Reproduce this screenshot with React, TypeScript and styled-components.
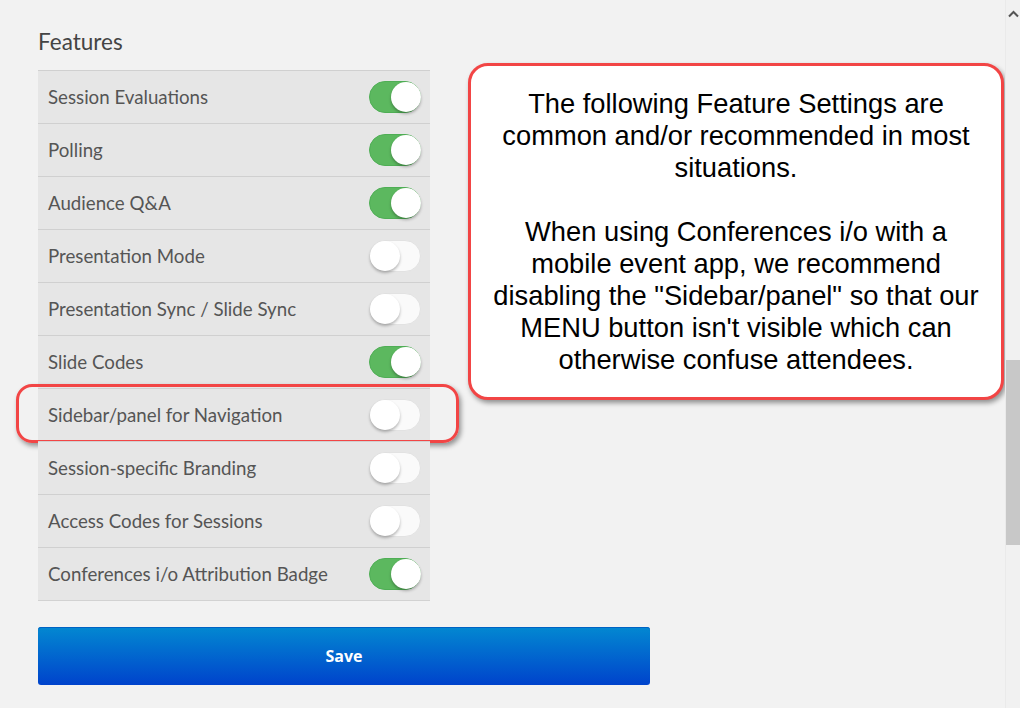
import React, { useState } from 'react';
import styled, { createGlobalStyle } from 'styled-components';

const GlobalStyle = createGlobalStyle`
  html, body {
    margin: 0;
    padding: 0;
    background: #f2f2f2;
  }
  body {
    font-family: Lato, "Open Sans", sans-serif;
    overflow: hidden;
  }
`;

const Page = styled.div`
  display: flex;
  width: 1020px;
  height: 708px;
  background: #f2f2f2;
`;

const Content = styled.div`
  flex: 1;
  display: grid;
  grid-template-columns: 392px 536px;
  grid-template-rows: auto auto auto;
  column-gap: 38px;
  align-content: start;
  padding: 28px 0 0 38px;
`;

const Heading = styled.h2`
  grid-column: 1 / 3;
  margin: 0 0 14px;
  font-size: 22.5px;
  line-height: 28px;
  font-weight: 400;
  color: #444;
`;

const List = styled.div`
  display: flex;
  flex-direction: column;
  border-bottom: 1px solid #d2d2d2;
`;

const Row = styled.div`
  position: relative;
  display: flex;
  align-items: center;
  justify-content: space-between;
  height: 52px;
  padding: 0 9px 0 10px;
  background: #e6e6e6;
  border-top: 1px solid #d0d0d0;
`;

const Label = styled.span`
  font-size: 18.7px;
  color: #555;
`;

const Highlight = styled.div`
  position: absolute;
  left: -22px;
  right: -29px;
  top: -5px;
  bottom: -2px;
  border: 3px solid #f24545;
  border-radius: 16px;
  box-shadow: 2px 3px 5px rgba(0, 0, 0, 0.4);
  pointer-events: none;
`;

const Track = styled.button<{ $on: boolean }>`
  position: relative;
  width: 52px;
  height: 32px;
  padding: 0;
  border-radius: 16px;
  cursor: pointer;
  border: 1px solid ${(p) => (p.$on ? '#4fae55' : '#e2e2e2')};
  background: ${(p) => (p.$on ? '#5cb85f' : '#fafafa')};
`;

const Knob = styled.span<{ $on: boolean }>`
  position: absolute;
  top: 0;
  left: ${(p) => (p.$on ? '21px' : '0')};
  width: 30px;
  height: 30px;
  border-radius: 50%;
  background: #fff;
  box-shadow: 0 2px 3px rgba(0, 0, 0, 0.28);
`;

const Callout = styled.div`
  margin-top: -7px;
  align-self: start;
  box-sizing: border-box;
  width: 536px;
  height: 337px;
  padding: 22px 4px 0;
  background: #fff;
  border: 3px solid #f24545;
  border-radius: 20px;
  box-shadow: 2px 3px 5px rgba(0, 0, 0, 0.4);
  font-family: "Liberation Sans", Arial, sans-serif;
  font-size: 27.3px;
  line-height: 32px;
  color: #000;
  text-align: center;
  white-space: nowrap;
`;

const Para = styled.p`
  margin: 0 0 32px;
`;

const SaveButton = styled.button`
  grid-column: 1 / 3;
  margin-top: 26px;
  width: 612px;
  height: 58px;
  border: none;
  border-radius: 3px;
  background: linear-gradient(to bottom, #0388d1, #0043cc);
  box-shadow: inset 0 1px 0 #0063c4;
  color: #fff;
  font-family: "Open Sans", Lato, sans-serif;
  font-weight: 700;
  font-size: 16px;
  cursor: pointer;
`;

const Scrollbar = styled.div`
  width: 14px;
  display: flex;
  flex-direction: column;
  align-items: center;
  background: #f1f1f1;
  border-left: 1px solid #eaeaea;
`;

const Arrow = styled.div`
  height: 22px;
  margin-top: 10px;
  display: flex;
  justify-content: center;
`;

const Thumb = styled.div`
  margin-top: 328px;
  width: 14px;
  height: 185px;
  background: #c8c8c8;
`;

const features = [
  { name: 'Session Evaluations', on: true },
  { name: 'Polling', on: true },
  { name: 'Audience Q&A', on: true },
  { name: 'Presentation Mode', on: false },
  { name: 'Presentation Sync / Slide Sync', on: false },
  { name: 'Slide Codes', on: true },
  { name: 'Sidebar/panel for Navigation', on: false, marked: true },
  { name: 'Session-specific Branding', on: false },
  { name: 'Access Codes for Sessions', on: false },
  { name: 'Conferences i/o Attribution Badge', on: true },
];

export default function App() {
  const [state, setState] = useState(features.map((f) => f.on));

  const toggle = (i: number) => {
    setState((prev) => prev.map((v, j) => (j === i ? !v : v)));
  };

  return (
    <>
      <GlobalStyle />
      <Page>
        <Content>
          <Heading>Features</Heading>
          <List>
            {features.map((f, i) => (
              <Row key={f.name}>
                <Label>{f.name}</Label>
                <Track $on={state[i]} onClick={() => toggle(i)} aria-label={f.name}>
                  <Knob $on={state[i]} />
                </Track>
                {f.marked && <Highlight />}
              </Row>
            ))}
          </List>
          <Callout>
            <Para>
              The following Feature Settings are
              <br />
              common and/or recommended in most
              <br />
              situations.
            </Para>
            <Para>
              When using Conferences i/o with a
              <br />
              mobile event app, we recommend
              <br />
              disabling the "Sidebar/panel" so that our
              <br />
              MENU button isn't visible which can
              <br />
              otherwise confuse attendees.
            </Para>
          </Callout>
          <SaveButton>Save</SaveButton>
        </Content>
        <Scrollbar>
          <Arrow>
            <svg width="11" height="8" viewBox="0 0 11 8">
              <path d="M1 6.5 L5.5 2 L10 6.5" fill="none" stroke="#555" strokeWidth="2" />
            </svg>
          </Arrow>
          <Thumb />
        </Scrollbar>
      </Page>
    </>
  );
}
